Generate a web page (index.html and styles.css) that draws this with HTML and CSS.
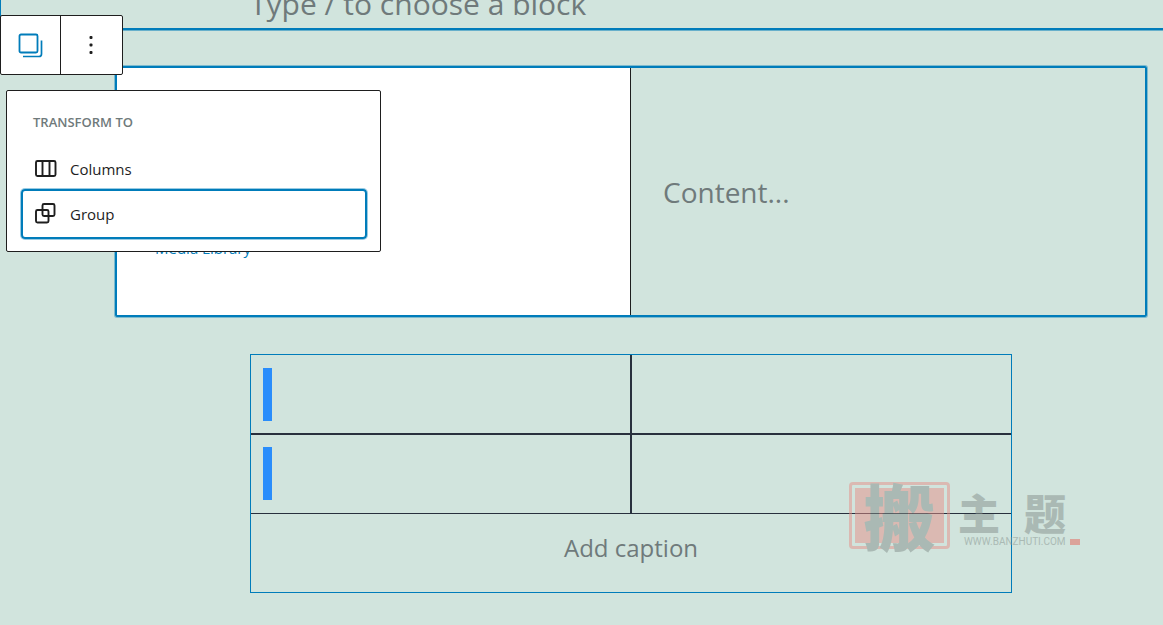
FILE: index.html
```html
<!DOCTYPE html>
<html lang="en">

<head>
  <meta charset="UTF-8">
  <meta name="viewport" content="width=device-width, initial-scale=1.0">
  <title>Block Editor</title>
  <link rel="stylesheet" href="styles.css">
</head>

<body>
  <main class="editor">
    <div class="paragraph-block">
      <p class="placeholder">Type / to choose a block</p>
    </div>

    <div class="blocks">
      <div class="media-text">
        <div class="media">
          <a href="#">Media Library</a>
        </div>
        <p class="content placeholder">Content...</p>
      </div>

      <figure class="table-block">
        <table>
          <tr>
            <td><span class="cell-mark"></span></td>
            <td></td>
          </tr>
          <tr>
            <td><span class="cell-mark"></span></td>
            <td></td>
          </tr>
        </table>
        <figcaption>Add caption</figcaption>
      </figure>
    </div>
  </main>

  <div class="toolbar">
    <button class="block-type" aria-label="Change block type">
      <svg width="30" height="30" viewBox="0 0 30 30" fill="none" stroke="currentColor" stroke-width="1.8">
        <rect x="3.500" y="4.500" width="18" height="18" rx="1.5" />
        <path d="M25.500 10.500v13.500a2.500 2.500 0 0 1-2.500 2.500H7" stroke-width="1.700" />
      </svg>
    </button>
    <button class="options" aria-label="Options">
      <svg width="30" height="30" viewBox="0 0 30 30" fill="currentColor">
        <rect x="12.500" y="6" width="3" height="3" rx="1" />
        <rect x="12.500" y="13.500" width="3" height="3" rx="1" />
        <rect x="12.500" y="21" width="3" height="3" rx="1" />
      </svg>
    </button>
  </div>

  <div class="popover">
    <h2>Transform to</h2>
    <button class="item">
      <svg width="30" height="30" viewBox="0 0 30 30" fill="none" stroke="currentColor" stroke-width="1.900">
        <rect x="5" y="7" width="19.500" height="15" rx="1.500" />
        <path d="M11.500 7v15M18.500 7v15" />
      </svg>
      Columns
    </button>
    <button class="item active">
      <svg width="30" height="30" viewBox="0 0 30 30" fill="none" stroke="currentColor" stroke-width="1.900">
        <rect x="11.500" y="5" width="12" height="12" rx="1.500" />
        <rect x="5" y="11" width="12.500" height="12.500" rx="1.500" />
      </svg>
      Group
    </button>
  </div>

  <div class="watermark">
    <div class="seal"><span>搬</span></div>
    <div class="brand">
      <div class="brand-name"><span>主</span><span>题</span></div>
      <div class="brand-url">WWW.BANZHUTI.COM <i></i></div>
    </div>
  </div>
</body>

</html>
```
FILE: styles.css
```css
body {
  margin: 0;
  background-color: #d1e4dd;
  font-family: "Open Sans", "Noto Sans", sans-serif;
  color: #1e1e1e;
  overflow-x: hidden;
}

p,
h2,
figure {
  margin: 0;
}

button {
  font: inherit;
  color: inherit;
  background: none;
  border: none;
  padding: 0;
  cursor: pointer;
}

.placeholder {
  font-size: 28px;
  line-height: 48px;
  color: #6f7a7b;
}

/* blocks */
.paragraph-block {
  display: flex;
  align-items: flex-end;
  height: 28px;
  padding-left: 98px;
  border-left: 1px solid #007cba;
  border-bottom: 2px solid #007cba;
  box-shadow: 0 1px rgba(0, 124, 186, 0.5);
  overflow: hidden;
}

.paragraph-block .placeholder {
  width: 762px;
  margin: 0 auto;
  font-size: 30px;
}

.blocks {
  padding: 36px 16px 32px 115px;
}

.media-text {
  display: grid;
  grid-template-columns: 1fr 1fr;
  min-height: 247px;
  border: 2px solid #007cba;
  border-radius: 2px;
  box-shadow: 0 0 0 1px rgba(0, 124, 186, 0.4);
}

.media {
  display: flex;
  align-items: flex-end;
  padding: 0 38px 55px;
  background-color: #fff;
  border-right: 1px solid #1e1e1e;
}

.media a {
  font-size: 15px;
  line-height: 24px;
  color: #007cba;
  text-decoration: none;
}

.content {
  align-self: center;
  padding: 0 32px;
}

.table-block {
  max-width: 760px;
  margin: 37px auto 0;
  border: 1px solid #007cba;
}

table {
  width: 100%;
  table-layout: fixed;
  border-spacing: 0;
}

td {
  height: 53px;
  padding: 13px 12px 12px;
  line-height: 0;
  border-bottom: 2px solid #28303d;
}

td:first-child {
  width: 355px;
  border-right: 2px solid #28303d;
}

tr:last-child td {
  padding: 12px 12px 13px;
  border-bottom-width: 1px;
}

.cell-mark {
  display: inline-block;
  width: 9px;
  height: 53px;
  background-color: #298dfb;
}

figcaption {
  padding: 13px 0 23px;
  font-size: 24px;
  line-height: 42px;
  text-align: center;
  color: #6f7a7b;
}

/* floating toolbar and menu */
.toolbar {
  position: absolute;
  top: 15px;
  left: 0;
  display: flex;
  height: 58px;
  background-color: #fff;
  border: 1px solid #1e1e1e;
  border-radius: 2px;
}

.toolbar button {
  display: flex;
  align-items: center;
  justify-content: center;
  width: 60px;
}

.toolbar .block-type {
  color: #007cba;
  border-right: 1px solid #1e1e1e;
}

.toolbar .options {
  width: 61px;
}

.popover {
  position: absolute;
  top: 90px;
  left: 6px;
  box-sizing: border-box;
  width: 375px;
  padding: 20px 13px 12px 14px;
  background-color: #fff;
  border: 1px solid #1e1e1e;
  border-radius: 2px;
}

.popover h2 {
  padding: 0 12px 16px;
  font-size: 13px;
  line-height: 22px;
  font-weight: 600;
  text-transform: uppercase;
  color: #6f7a7b;
}

.item {
  display: flex;
  align-items: center;
  gap: 9px;
  width: 100%;
  height: 40px;
  padding: 0 10px;
  font-size: 15px;
}

.item.active {
  height: 50px;
  padding: 0 8px;
  border: 2px solid #007cba;
  border-radius: 4px;
  box-shadow: 0 0 0 1px rgba(0, 124, 186, 0.4);
}

/* watermark */
.watermark {
  position: absolute;
  top: 482px;
  left: 849px;
  display: flex;
  gap: 8px;
  font-family: "Noto Sans CJK SC", sans-serif;
  color: #84908c;
  opacity: 0.5;
  pointer-events: none;
}

.seal {
  width: 89px;
  height: 55px;
  padding: 3px;
  border: 3px solid #e59088;
  border-radius: 4px;
}

.seal span {
  display: block;
  height: 55px;
  background-color: #e59088;
  font-size: 72px;
  line-height: 52px;
  font-weight: 900;
  text-align: center;
}

.brand-name {
  display: flex;
  gap: 24px;
  padding-top: 8px;
  font-size: 42px;
  line-height: 44px;
  font-weight: 900;
}

.brand-url {
  display: flex;
  align-items: center;
  gap: 4px;
  padding-left: 6px;
  font-family: Roboto, sans-serif;
  font-size: 10px;
  line-height: 16px;
}

.brand-url i {
  width: 10px;
  height: 6px;
  background-color: #e5645a;
}
```
